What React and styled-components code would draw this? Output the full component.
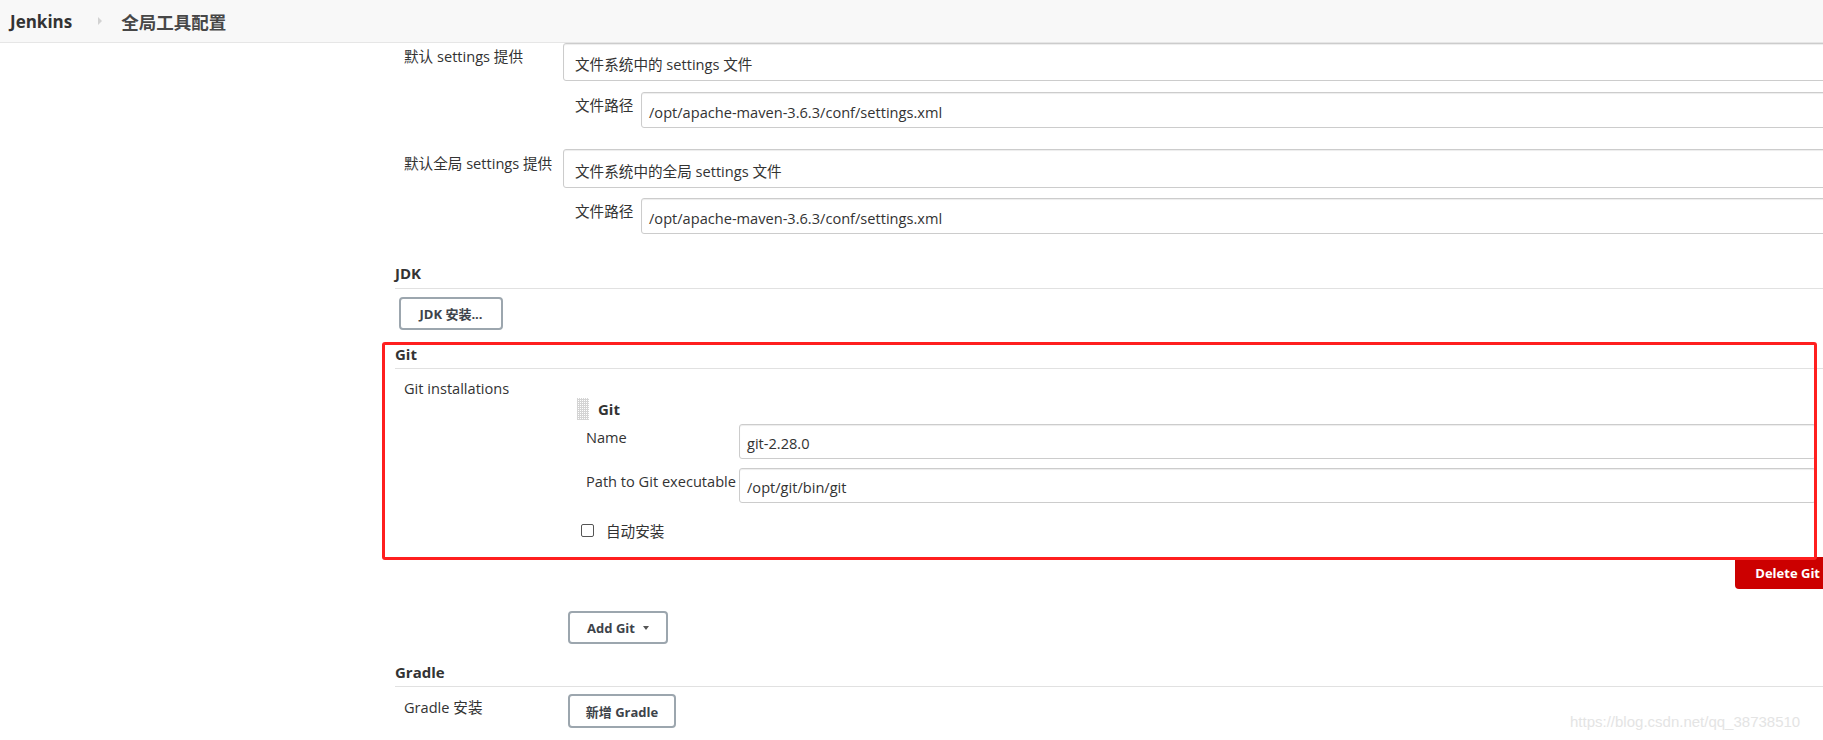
import React from 'react';
import styled, { createGlobalStyle } from 'styled-components';

// 全局工具配置 - Maven / JDK / Git / Gradle 部分

const GlobalStyle = createGlobalStyle`
  html, body {
    margin: 0;
    padding: 0;
    overflow: hidden;
    background: #fff;
  }
  body {
    font-family: "Open Sans", "Noto Sans CJK SC", sans-serif;
    font-size: 14.6px;
    color: #333;
  }
`;

const App = () => {
  return (
    <>
      <GlobalStyle />
      <Page>
        <TopBar>
          <Crumb>Jenkins</Crumb>
          <CrumbSep />
          <CrumbTitle>全局工具配置</CrumbTitle>
        </TopBar>

        <Layout>
          <SidePanel />
          <Main>
            {/* maven settings (已经滚动到中间) */}
            <SettingRow>
              <SettingName $top={3}>默认 settings 提供</SettingName>
              <SettingValue>
                <Field $h={38} $pad={11}>文件系统中的 settings 文件</Field>
                <SubRow $mt={11}>
                  <SubName>文件路径</SubName>
                  <Field $h={36} $pad={7}>/opt/apache-maven-3.6.3/conf/settings.xml</Field>
                </SubRow>
              </SettingValue>
            </SettingRow>

            <SettingRow $mt={21}>
              <SettingName $top={4}>默认全局 settings 提供</SettingName>
              <SettingValue>
                <Field $h={39} $pad={11}>文件系统中的全局 settings 文件</Field>
                <SubRow $mt={10}>
                  <SubName>文件路径</SubName>
                  <Field $h={36} $pad={7}>/opt/apache-maven-3.6.3/conf/settings.xml</Field>
                </SubRow>
              </SettingValue>
            </SettingRow>

            <Section $mt={29}>
              <SectionTitle>JDK</SectionTitle>
              <Button $ml={4} $mt={8} $w={104}>JDK 安装...</Button>
            </Section>

            <Section $mt={14}>
              <Highlight>
                <SectionTitle $pb={4}>Git</SectionTitle>
                <SettingRow>
                  <SettingName $top={9}>Git installations</SettingName>
                  <SettingValue $mr={24}>
                    <Chunk>
                      <ChunkHead>
                        <DragHandle />
                        <ChunkTitle>Git</ChunkTitle>
                      </ChunkHead>
                      <InnerRow $mt={4}>
                        <InnerName>Name</InnerName>
                        <Field $h={35} $pad={7}>git-2.28.0</Field>
                      </InnerRow>
                      <InnerRow $mt={9}>
                        <InnerName>Path to Git executable</InnerName>
                        <Field $h={35} $pad={7}>/opt/git/bin/git</Field>
                      </InnerRow>
                      <CheckRow>
                        <CheckBox />
                        <span>自动安装</span>
                      </CheckRow>
                    </Chunk>
                  </SettingValue>
                </SettingRow>
                <RedFrame />
              </Highlight>
              <DeleteRow>
                <DangerButton>Delete Git</DangerButton>
              </DeleteRow>
              <Button $ml={173} $mt={22} $w={100}>
                Add Git <Caret />
              </Button>
            </Section>

            <Section $mt={18}>
              <SectionTitle $pb={4}>Gradle</SectionTitle>
              <SettingRow $mt={7}>
                <SettingName $top={3}>Gradle 安装</SettingName>
                <SettingValue>
                  <Button $ml={5} $w={108} $h={34}>新增 Gradle</Button>
                </SettingValue>
              </SettingRow>
            </Section>
          </Main>
        </Layout>

        <Watermark>https://blog.csdn.net/qq_38738510</Watermark>
      </Page>
    </>
  );
};

export default App;

const Page = styled.div`
  position: relative;
  width: 1840px;
  height: 740px;
`;

const TopBar = styled.div`
  height: 42px;
  display: flex;
  align-items: center;
  padding-left: 10px;
  background: #f8f8f8;
  border-bottom: 1px solid #e6e6e6;
`;

const Crumb = styled.span`
  font-size: 17px;
  font-weight: 700;
  color: #333;
`;

const CrumbSep = styled.span`
  width: 0;
  height: 0;
  margin: 0 19px 0 26px;
  border-top: 4px solid transparent;
  border-bottom: 4px solid transparent;
  border-left: 4px solid #d2d2d2;
`;

const CrumbTitle = styled.span`
  font-size: 17.5px;
  font-weight: 700;
  color: #474747;
`;

const Layout = styled.div`
  display: grid;
  grid-template-columns: 395px 1fr;
`;

const SidePanel = styled.div``;

const Main = styled.div`
  display: flex;
  flex-direction: column;
`;

const SettingRow = styled.div`
  display: grid;
  grid-template-columns: 168px 1fr;
  margin-top: ${(p) => p.$mt || 0}px;
`;

const SettingName = styled.div`
  padding-left: 9px;
  padding-top: ${(p) => p.$top || 0}px;
  line-height: 20px;
  white-space: nowrap;
`;

const SettingValue = styled.div`
  display: flex;
  flex-direction: column;
  margin-right: ${(p) => p.$mr || 0}px;
`;

const Field = styled.div`
  box-sizing: border-box;
  height: ${(p) => p.$h}px;
  display: flex;
  align-items: center;
  padding-left: ${(p) => p.$pad}px;
  padding-top: 3px;
  border: 1px solid #ccc;
  border-radius: 3px;
  box-shadow: inset 0 1px 1px rgba(0, 0, 0, 0.075);
  background: #fff;
  white-space: nowrap;
`;

const SubRow = styled.div`
  display: grid;
  grid-template-columns: 66px 1fr;
  padding-left: 12px;
  margin-top: ${(p) => p.$mt || 0}px;
`;

const SubName = styled.div`
  padding-top: 3px;
  line-height: 20px;
`;

const Section = styled.div`
  display: flex;
  flex-direction: column;
  align-items: flex-start;
  margin-top: ${(p) => p.$mt || 0}px;
`;

const SectionTitle = styled.div`
  align-self: stretch;
  font-size: 15px;
  font-weight: 700;
  line-height: 20px;
  padding-bottom: ${(p) => (p.$pb != null ? p.$pb : 5)}px;
  border-bottom: 1px solid #e1e1e1;
`;

const Button = styled.button`
  box-sizing: border-box;
  display: inline-flex;
  align-items: center;
  justify-content: center;
  gap: 8px;
  width: ${(p) => p.$w}px;
  height: ${(p) => p.$h || 33}px;
  margin-left: ${(p) => p.$ml || 0}px;
  margin-top: ${(p) => p.$mt || 0}px;
  padding: 0;
  border: 2px solid #9ca6ae;
  border-radius: 4px;
  background: #fff;
  font-family: "Open Sans", "Noto Sans CJK SC", sans-serif;
  font-size: 13px;
  font-weight: 700;
  color: #3d434a;
`;

const Caret = styled.span`
  width: 0;
  height: 0;
  border-left: 3.5px solid transparent;
  border-right: 3.5px solid transparent;
  border-top: 4px solid #555;
`;

const Highlight = styled.div`
  position: relative;
  align-self: stretch;
  padding-bottom: 20px;
`;

const RedFrame = styled.div`
  position: absolute;
  left: -13px;
  top: -2px;
  right: 23px;
  bottom: -3px;
  border: 3px solid #ff1f1f;
  border-radius: 3px;
  pointer-events: none;
`;

const Chunk = styled.div`
  display: flex;
  flex-direction: column;
  padding-left: 14px;
  margin-top: 29px;
`;

const ChunkHead = styled.div`
  display: flex;
  align-items: center;
  gap: 9px;
  height: 22px;
`;

const DragHandle = styled.div`
  width: 12px;
  height: 22px;
  background-image: linear-gradient(90deg, #d4d4d4 1px, transparent 1px),
    linear-gradient(0deg, #d4d4d4 1px, transparent 1px);
  background-size: 2px 2px;
`;

const ChunkTitle = styled.div`
  font-size: 15px;
  font-weight: 700;
  line-height: 20px;
`;

const InnerRow = styled.div`
  display: grid;
  grid-template-columns: 153px 1fr;
  padding-left: 9px;
  margin-top: ${(p) => p.$mt || 0}px;
`;

const InnerName = styled.div`
  padding-top: 3px;
  line-height: 20px;
  white-space: nowrap;
`;

const CheckRow = styled.div`
  display: flex;
  align-items: center;
  gap: 12px;
  height: 13px;
  margin-top: 21px;
  padding-left: 4px;
  line-height: 20px;
`;

const CheckBox = styled.span`
  box-sizing: border-box;
  width: 13px;
  height: 13px;
  border: 1px solid #555;
  border-radius: 2px;
  background: #fff;
`;

const DeleteRow = styled.div`
  align-self: stretch;
  display: flex;
  justify-content: flex-end;
`;

const DangerButton = styled.button`
  height: 32px;
  padding: 0 20px;
  border: none;
  border-radius: 0 0 4px 4px;
  background: #cc0000;
  color: #fff;
  font-family: "Open Sans", "Noto Sans CJK SC", sans-serif;
  font-size: 13px;
  font-weight: 700;
`;

const Watermark = styled.div`
  position: absolute;
  left: 1570px;
  top: 712px;
  line-height: 20px;
  font-family: "Liberation Sans", Arial, sans-serif;
  font-size: 15px;
  color: #e4e4e4;
  white-space: nowrap;
`;
